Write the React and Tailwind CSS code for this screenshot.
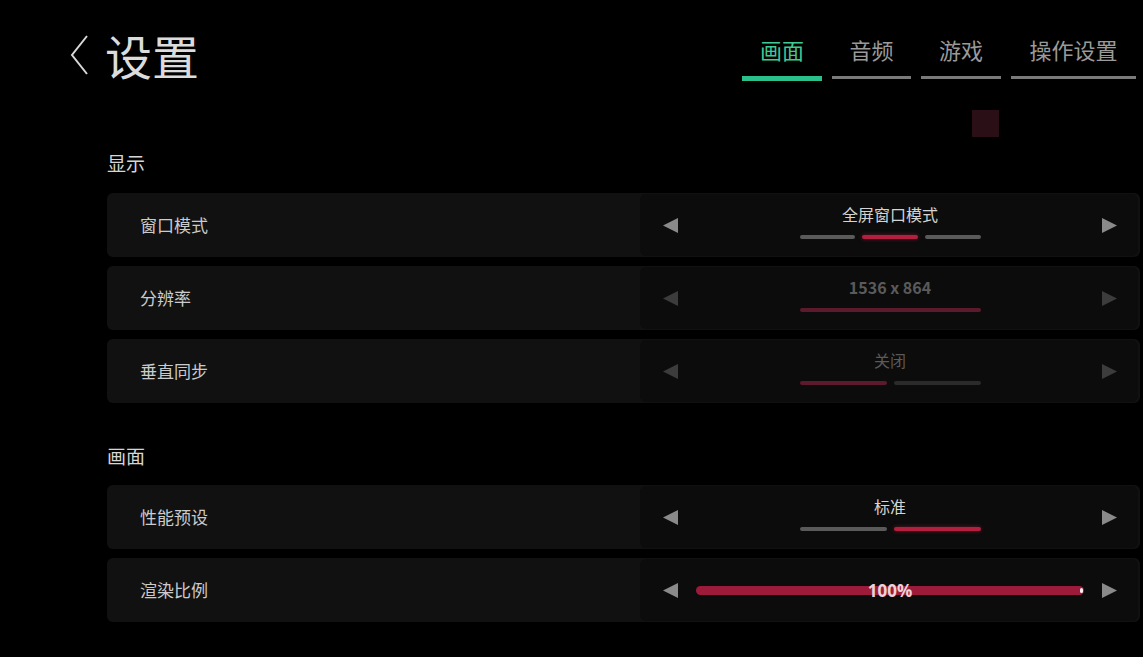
import React from 'react';

const font = { fontFamily: '"Noto Sans CJK SC", "Noto Sans", sans-serif' };

const tabs = [
  { name: '画面', w: 'w-[80px]', active: true },
  { name: '音频', w: 'w-[79px]' },
  { name: '游戏', w: 'w-[80px]' },
  { name: '操作设置', w: 'w-[125px]' },
];

const Arrow = ({ dir, dim }) => (
  <svg width="15" height="15" viewBox="0 0 15 15" className="shrink-0">
    <polygon
      points={dir === 'left' ? '15,0 15,15 0,7.5' : '0,0 0,15 15,7.5'}
      fill={dim ? '#3c3c3c' : '#8a8a8a'}
    />
  </svg>
);

const Segments = ({ count, active, dim }) => (
  <div className="flex gap-[7px] w-[181px]">
    {Array.from({ length: count }).map((_, i) => {
      const on = i === active;
      let cls = 'bg-[#5a5a5a]';
      if (on) cls = dim ? 'bg-[#5e1a2d]' : 'bg-[#b3203f] shadow-[0_0_4px_rgba(200,30,70,0.5)]';
      else if (dim) cls = 'bg-[#2b2b2b]';
      return <div key={i} className={`flex-1 h-[4px] rounded-full ${cls}`} />;
    })}
  </div>
);

const Row = ({ label, children, dim }) => (
  <div className="flex h-[64px] rounded-md bg-[#111111]">
    <div className="w-[533px] flex items-center pl-[33px] text-[17px] text-[#cbcbcb]" style={font}>
      {label}
    </div>
    <div className="flex-1 my-[1px] mr-[2px] rounded-md bg-[#0c0c0c] flex items-center pl-[23px] pr-[21px]">
      <Arrow dir="left" dim={dim} />
      <div className="flex-1 flex flex-col items-center">{children}</div>
      <Arrow dir="right" dim={dim} />
    </div>
  </div>
);

const Choice = ({ value, count, active, dim, bold }) => (
  <div className="flex flex-col items-center -mt-[8px]">
    <div
      className={`text-[16px] leading-[22px] ${dim ? 'text-[#5a5a5a]' : 'text-[#d4d4d4]'} ${bold ? 'font-bold' : ''}`}
      style={font}
    >
      {value}
    </div>
    <div className="mt-[10px]">
      <Segments count={count} active={active} dim={dim} />
    </div>
  </div>
);

export default function App() {
  return (
    <div className="w-[1143px] h-[657px] bg-black overflow-hidden" style={font}>
      {/* Header */}
      <div className="flex items-start justify-between pt-[26px] pl-[68px] pr-[7px]">
        <div className="flex items-center">
          <svg width="22" height="44" viewBox="0 0 22 44">
            <polyline points="19,3 4,22 19,41" fill="none" stroke="#d8d8d8" strokeWidth="2" />
          </svg>
          <div className="ml-[15px] text-[47px] leading-[58px] text-[#dcdcdc]">设置</div>
        </div>
        <div className="flex gap-[10px] pt-[7px]">
          {tabs.map((t) => (
            <div key={t.name} className={`${t.w} flex flex-col items-center`}>
              <div className={`text-[22px] leading-[32px] ${t.active ? 'text-[#3fc994]' : 'text-[#9a9a9a]'}`}>
                {t.name}
              </div>
              <div
                className={`w-full mt-[11px] ${t.active ? 'h-[5px] bg-[#2bbf8c]' : 'h-[3px] bg-[#7a7a7a]'}`}
              />
            </div>
          ))}
        </div>
      </div>

      <div className="flex justify-end pr-[144px] mt-[26px]">
        <div className="w-[27px] h-[27px] bg-[#2b0f17]" />
      </div>

      {/* Content */}
      <div className="pl-[107px] pr-[3px]">
        <div className="mt-[13px] text-[19px] leading-[26px] text-[#d6d6d6]">显示</div>
        <div className="mt-[17px] flex flex-col gap-[9px]">
          <Row label="窗口模式">
            <Choice value="全屏窗口模式" count={3} active={1} />
          </Row>
          <Row label="分辨率" dim>
            <Choice value="1536 x 864" count={1} active={0} dim bold />
          </Row>
          <Row label="垂直同步" dim>
            <Choice value="关闭" count={2} active={0} dim />
          </Row>
        </div>

        <div className="mt-[40px] text-[19px] leading-[26px] text-[#d6d6d6]">画面</div>
        <div className="mt-[16px] flex flex-col gap-[9px]">
          <Row label="性能预设">
            <Choice value="标准" count={2} active={1} />
          </Row>
          <Row label="渲染比例">
            <div className="relative w-[388px] h-[9px] rounded-full bg-[#9c1b3b] flex items-center justify-center">
              <span
                className="text-[17px] font-bold text-[#ead2d7] leading-none"
                style={{ fontFamily: '"Open Sans", "Noto Sans", sans-serif' }}
              >
                100%
              </span>
              <div className="absolute right-[1px] top-[2px] w-[3px] h-[5px] rounded-full bg-[#f0f0f0]" />
            </div>
          </Row>
        </div>
      </div>
    </div>
  );
}
